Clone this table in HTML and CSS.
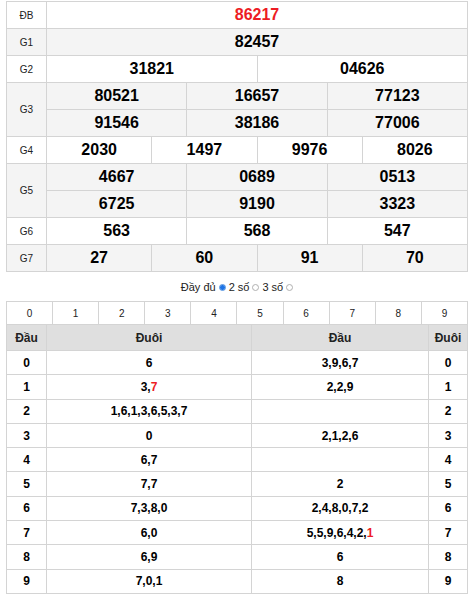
FILE: index.html
```html
<!DOCTYPE html>
<html lang="vi">
<head>
<meta charset="utf-8">
<title>Kết quả</title>
<link rel="stylesheet" href="styles.css">
</head>
<body>
<div class="page">
  <div class="kq">
    <div class="lbl">ĐB</div><div class="num red s12">86217</div>
    <div class="lbl g">G1</div><div class="num g s12">82457</div>
    <div class="lbl">G2</div><div class="num s6">31821</div><div class="num s6">04626</div>
    <div class="lbl g r2">G3</div><div class="num g s4">80521</div><div class="num g s4">16657</div><div class="num g s4">77123</div>
    <div class="num g s4">91546</div><div class="num g s4">38186</div><div class="num g s4">77006</div>
    <div class="lbl">G4</div><div class="num s3">2030</div><div class="num s3">1497</div><div class="num s3">9976</div><div class="num s3">8026</div>
    <div class="lbl g r2">G5</div><div class="num g s4">4667</div><div class="num g s4">0689</div><div class="num g s4">0513</div>
    <div class="num g s4">6725</div><div class="num g s4">9190</div><div class="num g s4">3323</div>
    <div class="lbl">G6</div><div class="num s4">563</div><div class="num s4">568</div><div class="num s4">547</div>
    <div class="lbl g">G7</div><div class="num g s3">27</div><div class="num g s3">60</div><div class="num g s3">91</div><div class="num g s3">70</div>
  </div>

  <div class="opts">
    <span>Đầy đủ</span><span class="radio on"></span>
    <span>2 số</span><span class="radio"></span>
    <span>3 số</span><span class="radio"></span>
  </div>

  <div class="digits">
    <div>0</div><div>1</div><div>2</div><div>3</div><div>4</div><div>5</div><div>6</div><div>7</div><div>8</div><div>9</div>
  </div>

  <div class="lt">
    <div class="h">Đầu</div><div class="h">Đuôi</div><div class="h">Đầu</div><div class="h">Đuôi</div>
    <div>0</div><div>6</div><div>3,9,6,7</div><div>0</div>
    <div>1</div><div>3,<span class="red">7</span></div><div>2,2,9</div><div>1</div>
    <div>2</div><div>1,6,1,3,6,5,3,7</div><div></div><div>2</div>
    <div>3</div><div>0</div><div>2,1,2,6</div><div>3</div>
    <div>4</div><div>6,7</div><div></div><div>4</div>
    <div>5</div><div>7,7</div><div>2</div><div>5</div>
    <div>6</div><div>7,3,8,0</div><div>2,4,8,0,7,2</div><div>6</div>
    <div>7</div><div>6,0</div><div>5,5,9,6,4,2,<span class="red">1</span></div><div>7</div>
    <div>8</div><div>6,9</div><div>6</div><div>8</div>
    <div>9</div><div>7,0,1</div><div>8</div><div>9</div>
  </div>
</div>
</body>
</html>
```

FILE: styles.css
```css
* { box-sizing: border-box; }
html, body { margin: 0; padding: 0; background: #fff; }
body { font-family: "Liberation Sans", Arial, sans-serif; color: #000; }

.page { padding: 1px 7px 0 6px; width: 475px; }

.kq {
  display: grid;
  grid-template-columns: 40px repeat(12, 1fr);
  grid-auto-rows: 27px;
  border-top: 1px solid #d4d4d4;
  border-left: 1px solid #d4d4d4;
}
.kq > div {
  border-right: 1px solid #d4d4d4;
  border-bottom: 1px solid #d4d4d4;
  display: flex;
  align-items: center;
  justify-content: center;
  background: #fff;
}
.kq .g { background: #f4f4f4; }
.kq .lbl { font-size: 10px; color: #222; grid-column: 1; }
.kq .r2 { grid-row: span 2; }
.kq .num { font-size: 16px; font-weight: bold; }
.s12 { grid-column: span 12; }
.s6 { grid-column: span 6; }
.s4 { grid-column: span 4; }
.s3 { grid-column: span 3; }
.red { color: #ed1c24; }

.opts {
  height: 29px;
  display: flex;
  align-items: center;
  justify-content: center;
  gap: 3px;
  font-size: 11px;
  color: #222;
  padding-top: 1px;
}
.radio {
  width: 7px;
  height: 7px;
  border-radius: 50%;
  border: 1px solid #b0b0b0;
  background: #fff;
  display: inline-block;
}
.radio.on {
  border-color: #4c8fe0;
  background: radial-gradient(circle, #1e74e6 0 2px, #7fb0ee 2.5px);
}

.digits {
  display: grid;
  grid-template-columns: repeat(10, 1fr);
  border-top: 1px solid #d4d4d4;
  border-left: 1px solid #d4d4d4;
}
.digits > div {
  height: 23px;
  border-right: 1px solid #d4d4d4;
  border-bottom: 1px solid #d4d4d4;
  display: flex;
  align-items: center;
  justify-content: center;
  font-size: 10px;
  color: #222;
}

.lt {
  display: grid;
  grid-template-columns: 40px 205px 177px 39px;
  grid-template-rows: 26px repeat(10, 24.3px);
  border-left: 1px solid #d4d4d4;
}
.lt > div {
  border-right: 1px solid #d4d4d4;
  border-bottom: 1px solid #d4d4d4;
  display: flex;
  align-items: center;
  justify-content: center;
  font-size: 12px;
  font-weight: bold;
}
.lt > .h { background: #dfdfdf; color: #222; }
```
